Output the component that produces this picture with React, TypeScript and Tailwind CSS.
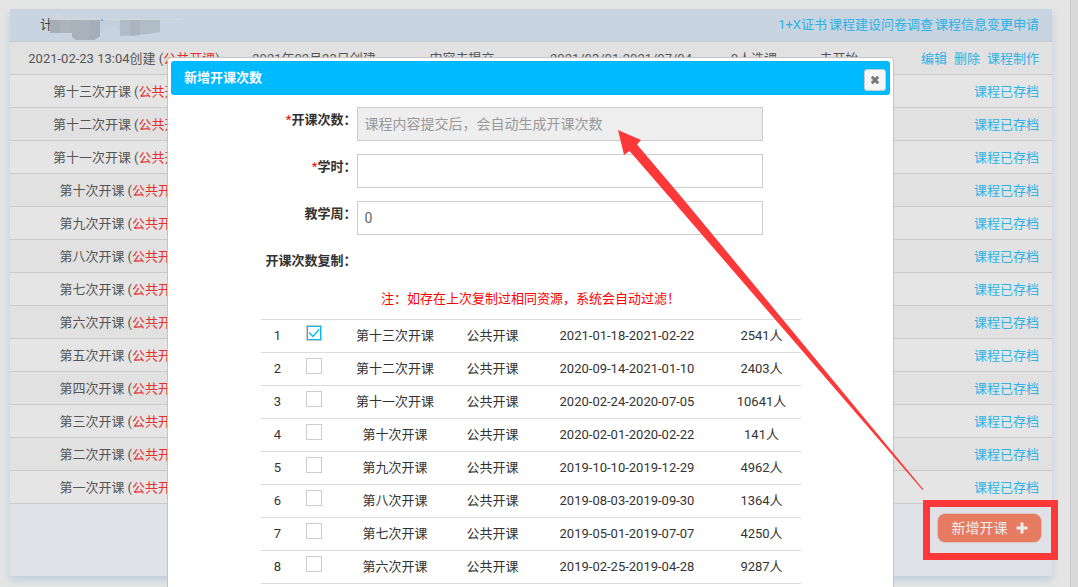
import React, {useState} from 'react';

interface CopySource {
  name: string;
  period: string;
  students: number;
}

const ARCHIVED = [
  '第十三次开课',
  '第十二次开课',
  '第十一次开课',
  '第十次开课',
  '第九次开课',
  '第八次开课',
  '第七次开课',
  '第六次开课',
  '第五次开课',
  '第四次开课',
  '第三次开课',
  '第二次开课',
  '第一次开课',
];

const COPY_SOURCES: CopySource[] = [
  {name: '第十三次开课', period: '2021-01-18-2021-02-22', students: 2541},
  {name: '第十二次开课', period: '2020-09-14-2021-01-10', students: 2403},
  {name: '第十一次开课', period: '2020-02-24-2020-07-05', students: 10641},
  {name: '第十次开课', period: '2020-02-01-2020-02-22', students: 141},
  {name: '第九次开课', period: '2019-10-10-2019-12-29', students: 4962},
  {name: '第八次开课', period: '2019-08-03-2019-09-30', students: 1364},
  {name: '第七次开课', period: '2019-05-01-2019-07-07', students: 4250},
  {name: '第六次开课', period: '2019-02-25-2019-04-28', students: 9287},
];

const CloseIcon: React.FC = () => (
  <svg width="10" height="10" viewBox="0 0 10 10" aria-hidden="true">
    <path d="M1.8 1.8L8.2 8.2M8.2 1.8L1.8 8.2" stroke="currentColor" strokeWidth="3" />
  </svg>
);

const PlusIcon: React.FC = () => (
  <svg width="12" height="12" viewBox="0 0 12 12" aria-hidden="true">
    <path d="M6 0.5V11.5M0.5 6H11.5" stroke="currentColor" strokeWidth="3" />
  </svg>
);

// Blurred-out course name
const RedactedName: React.FC = () => (
  <svg width="134" height="32" className="-ml-[3px]" aria-hidden="true">
    <path d="M3 11L4 6L9 5L15 9L26 7L34 9L50 9V11Z" fill="#d0d6dc" />
    <path d="M58 10L132 10V11L58 11Z" fill="#d3dadf" />
    <path d="M50 11H70V22L66 20L66 14L60 18L50 24Z" fill="#c4d0dc" />
    <path d="M0 11H50V27L44 31H26L22 28V24H0Z" fill="#a8b2ba" />
    <path d="M0 11H10V24H0Z M40 11H50V27L44 31H40Z" fill="#a3aeb8" />
    <path d="M10 11H20V24H10Z" fill="#adb5bc" />
    <path d="M70 11H110V23L98 25L85 26L70 27Z" fill="#b0bcc6" />
    <path d="M80 11H90V26L80 27Z" fill="#abb5bf" />
    <circle cx="52" cy="11" r="0.7" fill="#3a5fa8" />
  </svg>
);

// Course list behind the dialog
const CourseTable: React.FC = () => (
  <table className="w-full table-fixed border-separate border-spacing-0 text-center text-[#555]">
    <colgroup>
      <col className="w-[228px]" />
      <col className="w-[152px]" />
      <col className="w-[144px]" />
      <col className="w-[174px]" />
      <col className="w-[92px]" />
      <col className="w-[78px]" />
      <col />
    </colgroup>
    <tbody className="[&_td]:h-[33px] [&_td]:border-b [&_td]:border-[#cacaca] [&_td]:p-0 [&_td]:pt-px [&>tr:nth-child(odd)]:bg-[#e1e1e1]">
      <tr>
        <td>
          2021-02-23 13:04创建 (<span className="text-[#e62e2e]">公共开课</span>)
        </td>
        <td>2021年02月23日创建</td>
        <td>内容未提交</td>
        <td>2021/03/01-2021/07/04</td>
        <td>0人选课</td>
        <td>未开始</td>
        <td>
          <div className="flex justify-end gap-[7px] pr-[13px] text-[#2eb2e6]">
            <a href="#edit">编辑</a>
            <a href="#delete">删除</a>
            <a href="#make">课程制作</a>
          </div>
        </td>
      </tr>
      {ARCHIVED.map((name) => (
        <tr key={name}>
          <td>
            {name} (<span className="text-[#e62e2e]">公共开课</span>)
          </td>
          <td colSpan={5} />
          <td>
            <a href="#archive" className="block pr-[13px] text-right text-[#2eb2e6]">
              课程已存档
            </a>
          </td>
        </tr>
      ))}
    </tbody>
  </table>
);

const Field: React.FC<{
  id: string;
  label: string;
  required?: boolean;
  children: React.ReactNode;
}> = ({id, label, required, children}) => (
  <div className="mb-[13px] flex">
    <label htmlFor={id} className="w-24 shrink-0 text-right leading-[26px] font-bold whitespace-nowrap">
      {required && <span className="font-normal text-[#ff0000]">*</span>}
      {label}：
    </label>
    {children}
  </div>
);

const NewSessionDialog: React.FC = () => {
  const [hours, setHours] = useState('');
  const [weeks, setWeeks] = useState('0');
  const [selected, setSelected] = useState<number[]>([0]);

  const toggle = (index: number) =>
    setSelected((prev) =>
      prev.includes(index) ? prev.filter((i) => i !== index) : [...prev, index],
    );

  const inputClass =
    'h-[34px] w-[406px] border border-[#ccc] bg-white px-[7px] text-sm text-[#666] placeholder:text-[#999] outline-none';

  return (
    <div
      role="dialog"
      aria-labelledby="dialog-title"
      className="w-[727px] rounded border border-[#c4c4c4] bg-white p-[3px] pb-10 text-[#333]">
      <div className="flex h-[34px] items-center justify-between rounded-[3px] bg-[#00baff] pr-1 pl-[13px]">
        <h2 id="dialog-title" className="font-bold text-white">
          新增开课次数
        </h2>
        <button
          aria-label="关闭"
          className="mb-1 flex size-[22px] items-center justify-center self-end rounded-[3px] border border-[#ccc] bg-[#f6f6f6] text-[#777]">
          <CloseIcon />
        </button>
      </div>

      <form className="mx-auto w-[540px] pt-3">
        <Field id="session" label="开课次数" required>
          <input
            id="session"
            className={`${inputClass} bg-[#eee]!`}
            placeholder="课程内容提交后，会自动生成开课次数"
            disabled
          />
        </Field>
        <Field id="hours" label="学时" required>
          <input id="hours" className={inputClass} value={hours} onChange={(e) => setHours(e.target.value)} />
        </Field>
        <Field id="weeks" label="教学周">
          <input id="weeks" className={inputClass} value={weeks} onChange={(e) => setWeeks(e.target.value)} />
        </Field>
        <p id="copy-label" className="w-24 text-right leading-[26px] font-bold">
          开课次数复制：
        </p>
        <p className="pt-3 pb-[7px] text-center leading-[26px] text-[#ff0000]">
          注：如存在上次复制过相同资源，系统会自动过滤！
        </p>

        <table
          aria-labelledby="copy-label"
          className="w-full table-fixed border-separate border-spacing-0 border-b border-[#dcdcdc] text-center">
          <colgroup>
            <col className="w-[34px]" />
            <col className="w-[38px]" />
            <col className="w-[125px]" />
            <col className="w-[70px]" />
            <col className="w-[199px]" />
            <col />
          </colgroup>
          <tbody className="[&_td]:h-[33px] [&_td]:border-t [&_td]:border-[#dcdcdc] [&_td]:p-0 [&_td]:pb-px">
            {COPY_SOURCES.map((row, index) => (
              <tr key={row.name}>
                <td>{index + 1}</td>
                <td>
                  <label className="relative mx-auto mb-[6px] block size-4">
                    <input
                      type="checkbox"
                      aria-label={row.name}
                      className="peer block size-4 appearance-none border border-[#ccc] bg-white checked:shadow-[inset_0_0_0_1px_#00baff]"
                      checked={selected.includes(index)}
                      onChange={() => toggle(index)}
                    />
                    <svg
                      viewBox="0 0 16 16"
                      className="pointer-events-none absolute inset-0 hidden size-4 peer-checked:block">
                      <path d="M3 7.5L7 11.5L13 4.5" fill="none" stroke="#00baff" strokeWidth="1.2" />
                    </svg>
                  </label>
                </td>
                <td>{row.name}</td>
                <td>公共开课</td>
                <td>{row.period}</td>
                <td className="pr-1!">{row.students}人</td>
              </tr>
            ))}
          </tbody>
        </table>
      </form>
    </div>
  );
};

const App: React.FC = () => {
  return (
    <div className="flex min-h-screen bg-[#e5e5e5] font-['Roboto','Noto_Sans_CJK_SC',sans-serif] text-[13px] leading-5">
      <main className="flex-1 pt-[9px] pr-[18px] pb-[11px] pl-[10px]">
        <section className="bg-[#e5e5e5] shadow-[0_4px_8px_#bccddd]">
          <header className="flex h-[33px] items-center justify-between border-b border-[#cacaca] bg-[#c8d4e0] pr-[13px] pl-[30px]">
            <div className="flex items-center text-[#444]">
              <span>计</span>
              <RedactedName />
            </div>
            <nav className="flex gap-[2px] text-[#2eb2e6]">
              <a href="#cert">1+X证书</a>
              <a href="#survey">课程建设问卷调查</a>
              <a href="#change">课程信息变更申请</a>
            </nav>
          </header>
          <CourseTable />
          <footer className="flex h-[72px] items-start justify-end bg-[#dfe1e6] pt-[9px] pr-[10px]">
            <button className="flex h-[30px] w-[105px] items-center justify-center gap-2 rounded-lg border border-[#dcc5c0] bg-[#e67b62] text-sm text-[#ececec]">
              新增开课
              <PlusIcon />
            </button>
          </footer>
        </section>
      </main>
      <div className="w-2 border-l border-[#c8c8c8] bg-[#dadada]" />

      <div className="fixed inset-0 flex items-start justify-center overflow-hidden pt-[57px] pr-[17px]">
        <NewSessionDialog />
      </div>

      {/* Arrow and frame pointing from the add button to the field */}
      <svg className="pointer-events-none fixed inset-0 h-full w-full" aria-hidden="true">
        <polygon points="618,130 641,140 637,144.5 684,200 923.5,489.5 922.5,490 672,200 629.5,151 624,155" fill="#fc3838" />
        <rect x="926.5" y="503.5" width="128" height="53" fill="none" stroke="#fc3838" strokeWidth="7" />
      </svg>
    </div>
  );
};

export default App;
